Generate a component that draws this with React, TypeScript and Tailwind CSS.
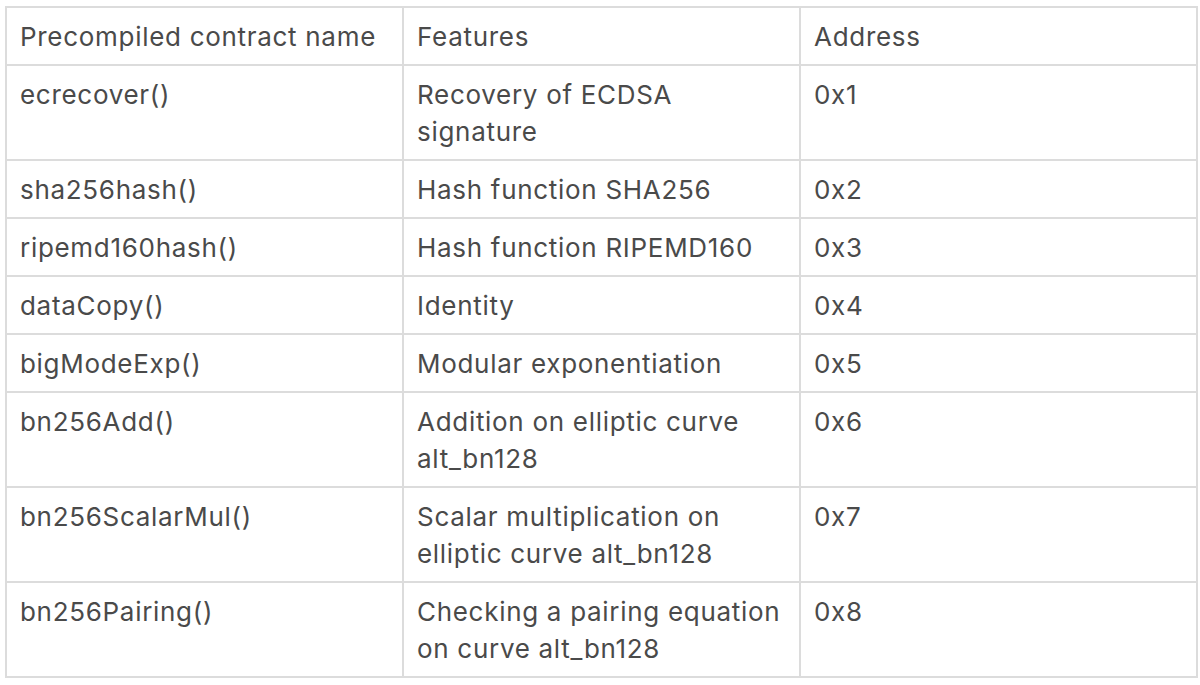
import React from 'react';

const rows: [string, string[], string][] = [
  ['ecrecover()', ['Recovery of ECDSA', 'signature'], '0x1'],
  ['sha256hash()', ['Hash function SHA256'], '0x2'],
  ['ripemd160hash()', ['Hash function RIPEMD160'], '0x3'],
  ['dataCopy()', ['Identity'], '0x4'],
  ['bigModeExp()', ['Modular exponentiation'], '0x5'],
  ['bn256Add()', ['Addition on elliptic curve', 'alt_bn128'], '0x6'],
  ['bn256ScalarMul()', ['Scalar multiplication on', 'elliptic curve alt_bn128'], '0x7'],
  ['bn256Pairing()', ['Checking a pairing equation', 'on curve alt_bn128'], '0x8'],
];

const cell = 'border-2 border-[#dcdcdc] align-top pl-[13px] pr-2 pt-[10px] pb-[9px] font-normal text-left whitespace-nowrap';

export default function App() {
  return (
    <div className="min-h-screen bg-white pt-[6px] pl-[5px] pr-[4px]">
      <table
        className="w-[1191px] table-fixed border-collapse text-[26px] leading-[37px] tracking-[0.7px] text-[#4a4a4a]"
        style={{ fontFamily: 'Inter, "Noto Sans", sans-serif' }}
      >
        <colgroup>
          <col className="w-[397px]" />
          <col className="w-[397px]" />
          <col className="w-[397px]" />
        </colgroup>
        <thead>
          <tr>
            <th className={cell}>Precompiled contract name</th>
            <th className={cell}>Features</th>
            <th className={cell}>Address</th>
          </tr>
        </thead>
        <tbody>
          {rows.map(r => (
            <tr key={r[0]}>
              <td className={cell}>{r[0]}</td>
              <td className={cell}>
                {r[1].map((line, i) => (
                  <div key={i}>{line}</div>
                ))}
              </td>
              <td className={cell}>{r[2]}</td>
            </tr>
          ))}
        </tbody>
      </table>
    </div>
  );
}
